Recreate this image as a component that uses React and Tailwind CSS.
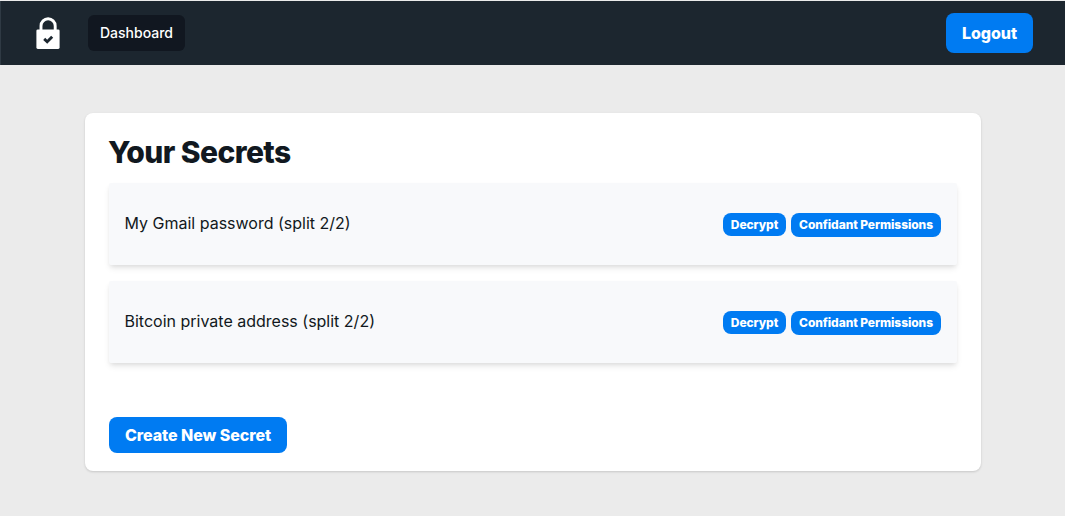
const secrets = [
  { id: 1, name: "My Gmail password (split 2/2)" },
  { id: 2, name: "Bitcoin private address (split 2/2)" },
]

function LockLogo() {
  return (
    <svg className="w-6 h-8 shrink-0" viewBox="0 0 24 32" fill="none">
      <path d="M5 13V8.9a7.1 7.1 0 0 1 14.2 0V13" stroke="#fff" strokeWidth="2.9" />
      <rect x="0.4" y="12.4" width="23.2" height="19.6" rx="1.4" fill="#fff" />
      <path d="M8.2 21.9l3 2.8 5-4.9" stroke="#1c262f" strokeWidth="2.9" />
    </svg>
  )
}

function Navbar() {
  return (
    <nav className="flex h-16 items-center justify-between border-l border-[#2f3a44] bg-[#1c262f] pr-8 pl-[35px]">
      <div className="flex items-center">
        <LockLogo />
        <a href="#" className="ml-7 flex h-9 w-[97px] items-center justify-center rounded-md bg-[#111720] text-sm font-medium text-white">
          Dashboard
        </a>
      </div>
      <button className="h-10 w-[87px] rounded-lg bg-[#007bf2] text-base font-extrabold tracking-[-0.05px] text-white">
        Logout
      </button>
    </nav>
  )
}

function SecretRow({ secret }) {
  return (
    <li className="flex h-[82px] items-center justify-between rounded-xs bg-[#f8f9fb] pr-4 pl-[15.5px] shadow-[0_4px_6px_-1px_rgba(0,0,0,0.1),0_2px_4px_-1px_rgba(0,0,0,0.06)]">
      <p className="mb-0.5 text-base text-[#111820]">{secret.name}</p>
      <div className="mt-0.5 flex items-start gap-[5px] text-xs font-extrabold tracking-[-0.08px] text-white">
        <button className="h-[23px] w-[63px] rounded-lg bg-[#007bf2]">Decrypt</button>
        <button className="h-6 w-[150px] rounded-lg bg-[#007bf2]">Confidant Permissions</button>
      </div>
    </li>
  )
}

export default function App() {
  return (
    <div className="min-h-screen bg-[#ebebeb] pt-px font-['Inter',sans-serif]">
      <Navbar />
      <main className="mt-12 ml-[85px] h-[358px] w-4xl rounded-lg bg-white px-6 pt-5 shadow-[0_1px_3px_0_rgba(0,0,0,0.1),0_1px_2px_0_rgba(0,0,0,0.06)]">
        <h1 className="-ml-px text-3xl leading-[38px] font-extrabold tracking-[-0.58px] text-[#111820]">Your Secrets</h1>
        <ul className="mt-3 w-full space-y-4">
          {secrets.map((secret) => (
            <SecretRow key={secret.id} secret={secret} />
          ))}
        </ul>
        <button className="mt-[54px] h-9 w-[178px] rounded-lg bg-[#007bf2] text-base font-extrabold tracking-[-0.05px] text-white">
          Create New Secret
        </button>
      </main>
    </div>
  )
}
